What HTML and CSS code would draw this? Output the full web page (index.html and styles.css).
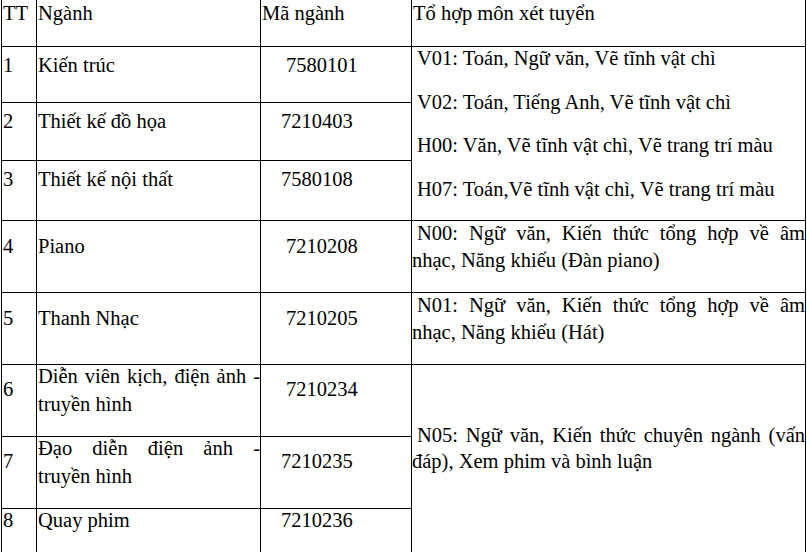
FILE: index.html
```html
<!DOCTYPE html>
<html lang="vi">
<head>
<meta charset="utf-8">
<title>Ngành tuyển sinh</title>
<link rel="stylesheet" href="styles.css">
</head>
<body>
<div class="table">
  <div class="cell head tt">TT</div>
  <div class="cell head name">Ngành</div>
  <div class="cell head">Mã ngành</div>
  <div class="cell head combo-head">Tổ hợp môn xét tuyển</div>

  <div class="cell tt r13">1</div>
  <div class="cell name r13">Kiến trúc</div>
  <div class="cell code sp r13">7580101</div>
  <div class="cell combos span3">
    <p>V01: Toán, Ngữ văn, Vẽ tĩnh vật chì</p>
    <p>V02: Toán, Tiếng Anh, Vẽ tĩnh vật chì</p>
    <p>H00: Văn, Vẽ tĩnh vật chì, Vẽ trang trí màu</p>
    <p>H07: Toán,Vẽ tĩnh vật chì, Vẽ trang trí màu</p>
  </div>

  <div class="cell tt r13">2</div>
  <div class="cell name r13">Thiết kế đồ họa</div>
  <div class="cell code r13">7210403</div>

  <div class="cell tt r13">3</div>
  <div class="cell name r13">Thiết kế nội thất</div>
  <div class="cell code r13">7580108</div>

  <div class="cell tt r45">4</div>
  <div class="cell name r45">Piano</div>
  <div class="cell code sp r45">7210208</div>
  <div class="cell just music"><p>N00: Ngữ văn, Kiến thức tổng hợp về âm nhạc, Năng khiếu (Đàn piano)</p></div>

  <div class="cell tt r45">5</div>
  <div class="cell name r45">Thanh Nhạc</div>
  <div class="cell code sp r45">7210205</div>
  <div class="cell just music"><p>N01: Ngữ văn, Kiến thức tổng hợp về âm nhạc, Năng khiếu (Hát)</p></div>

  <div class="cell tt r67">6</div>
  <div class="cell name two">
    <span class="line first">Diễn viên kịch, điện ảnh -</span>
    <span class="line second">truyền hình</span>
  </div>
  <div class="cell code sp r67">7210234</div>
  <div class="cell just span3 n05">N05: Ngữ văn, Kiến thức chuyên ngành (vấn đáp), Xem phim và bình luận</div>

  <div class="cell tt r67">7</div>
  <div class="cell name two">
    <span class="line first">Đạo diễn điện ảnh -</span>
    <span class="line second">truyền hình</span>
  </div>
  <div class="cell code r67">7210235</div>

  <div class="cell tt">8</div>
  <div class="cell name">Quay phim</div>
  <div class="cell code">7210236</div>
</div>
</body>
</html>
```

FILE: styles.css
```css
html, body {
  margin: 0;
  padding: 0;
  background: #fff;
  overflow: hidden;
}

.table {
  margin-left: 1px;
  width: 805px;
  box-sizing: border-box;
  display: grid;
  grid-template-columns: 34px 223px 150px 393px;
  grid-template-rows: 46px 55px 57px 59px 71px 71px 71px 71px 60px;
  gap: 1px;
  padding: 0 1px 1px 1px;
  background: #000;
  font-family: "Liberation Serif", "Times New Roman", serif;
  font-size: 20.5px;
  line-height: 23px;
  color: #000;
}

.cell {
  background: #fff;
  padding: 0 0 0 1px;
  white-space: nowrap;
}

.head {
  padding-top: 1.5px;
}

.combo-head {
  padding-left: 1px;
}

.r13 { padding-top: 7px; }
.r45 { padding-top: 14px; }
.r67 { padding-top: 13px; }

.code { padding-left: 20px; }
.code.sp { padding-left: 25px; }

.span3 { grid-row: span 3; }

.combos {
  padding-left: 0;
}

.combos p {
  margin: 0 0 20.67px 0;
  text-indent: 5px;
}

.just {
  white-space: normal;
  padding-left: 0;
  text-align: justify;
  text-indent: 5px;
}

.music {
  padding-top: 0;
  overflow: hidden;
}

.music p {
  margin: -1.2px 0 0 0;
  line-height: 27.5px;
}

.n05 {
  padding-top: 58.2px;
  line-height: 25.8px;
}

.two .line {
  display: block;
}

.two .first {
  text-align: justify;
  text-align-last: justify;
}

.two .second {
  margin-top: 4.5px;
}
```
